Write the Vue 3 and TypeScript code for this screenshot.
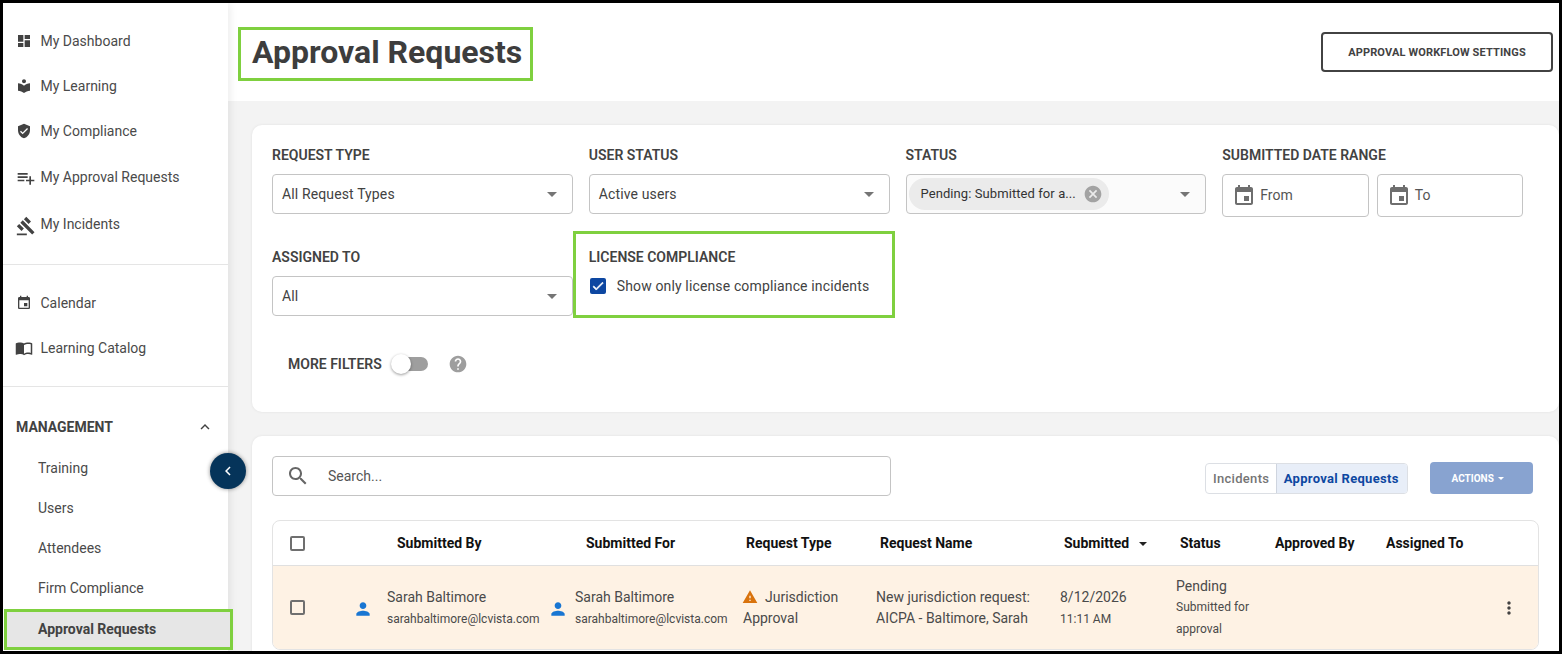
<script setup lang="ts">
const icons: Record<string, string> = {
  dashboard: 'M3 13h8V3H3v10zm0 8h8v-6H3v6zm10 0h8V11h-8v10zm0-18v6h8V3h-8z',
  library: 'M12 11.55C9.64 9.35 6.48 8 3 8v11c3.48 0 6.64 1.35 9 3.55 2.36-2.19 5.52-3.55 9-3.55V8c-3.48 0-6.64 1.35-9 3.55zM12 8c1.66 0 3-1.34 3-3s-1.34-3-3-3-3 1.34-3 3 1.34 3 3 3z',
  shield: 'M12 1L3 5v6c0 5.55 3.84 10.74 9 12 5.16-1.26 9-6.45 9-12V5l-9-4zm-2 16l-4-4 1.41-1.41L10 14.17l6.59-6.59L18 9l-8 8z',
  playlist: 'M14 10H2v2h12v-2zm0-4H2v2h12V6zm4 8v-4h-2v4h-4v2h4v4h2v-4h4v-2h-4zM2 16h8v-2H2v2z',
  gavel: 'M1 21h12v2H1zM5.245 8.07l2.83-2.827 14.14 14.142-2.828 2.828zM12.317 1l5.657 5.656-2.83 2.83-5.654-5.66zM3.825 9.485l5.657 5.657-2.828 2.828-5.657-5.657z',
  event: 'M17 12h-5v5h5v-5zM16 1v2H8V1H6v2H5c-1.11 0-1.99.9-1.99 2L3 19c0 1.1.89 2 2 2h14c1.1 0 2-.9 2-2V5c0-1.1-.9-2-2-2h-1V1h-2zm3 18H5V8h14v11z',
  book: 'M21 5c-1.11-.35-2.33-.5-3.5-.5-1.95 0-4.05.4-5.5 1.5-1.45-1.1-3.55-1.5-5.5-1.5S2.45 4.9 1 6v14.65c0 .25.25.5.5.5.1 0 .15-.05.25-.05C3.1 20.45 5.05 20 6.5 20c1.95 0 4.05.4 5.5 1.5 1.35-.85 3.8-1.5 5.5-1.5 1.65 0 3.35.3 4.75 1.05.1.05.15.05.25.05.25 0 .5-.25.5-.5V6c-.6-.45-1.25-.75-2-1zm0 13.5c-1.1-.35-2.3-.5-3.5-.5-1.7 0-4.15.65-5.5 1.5V8c1.35-.85 3.8-1.5 5.5-1.5 1.2 0 2.4.15 3.5.5v11.5z',
  person: 'M12 12c2.21 0 4-1.79 4-4s-1.79-4-4-4-4 1.79-4 4 1.79 4 4 4zm0 2c-2.67 0-8 1.34-8 4v2h16v-2c0-2.66-5.33-4-8-4z',
  warning: 'M1 21h22L12 2 1 21zm12-3h-2v-2h2v2zm0-4h-2v-4h2v4z',
  search: 'M15.5 14h-.79l-.28-.27C15.41 12.59 16 11.11 16 9.5 16 5.91 13.09 3 9.5 3S3 5.91 3 9.5 5.91 16 9.5 16c1.61 0 3.09-.59 4.23-1.57l.27.28v.79l5 4.99L20.49 19l-4.99-5zm-6 0C7.01 14 5 11.99 5 9.5S7.01 5 9.5 5 14 7.01 14 9.5 11.99 14 9.5 14z',
  more: 'M12 8c1.1 0 2-.9 2-2s-.9-2-2-2-2 .9-2 2 .9 2 2 2zm0 2c-1.1 0-2 .9-2 2s.9 2 2 2 2-.9 2-2-.9-2-2-2zm0 6c-1.1 0-2 .9-2 2s.9 2 2 2 2-.9 2-2-.9-2-2-2z',
  help: 'M12 2C6.48 2 2 6.48 2 12s4.48 10 10 10 10-4.48 10-10S17.52 2 12 2zm1 17h-2v-2h2v2zm2.07-7.75l-.9.92C13.45 12.9 13 13.5 13 15h-2v-.5c0-1.1.45-2.1 1.17-2.83l1.24-1.26c.37-.36.59-.86.59-1.41 0-1.1-.9-2-2-2s-2 .9-2 2H8c0-2.21 1.79-4 4-4s4 1.79 4 4c0 .88-.36 1.68-.93 2.25z',
  cancel: 'M12 2C6.47 2 2 6.47 2 12s4.47 10 10 10 10-4.47 10-10S17.53 2 12 2zm5 13.59L15.59 17 12 13.41 8.41 17 7 15.59 10.59 12 7 8.41 8.41 7 12 10.59 15.59 7 17 8.41 13.41 12 17 15.59z',
  calendar: 'M17 12h-5v5h5v-5zM16 1v2H8V1H6v2H5c-1.11 0-1.99.9-1.99 2L3 19c0 1.1.89 2 2 2h14c1.1 0 2-.9 2-2V5c0-1.1-.9-2-2-2h-1V1h-2zm3 18H5V8h14v11z',
  check: 'M9 16.17L4.83 12l-1.42 1.41L9 19 21 7l-1.41-1.41z',
  up: 'M7.41 15.41L12 10.83l4.59 4.58L18 14l-6-6-6 6z',
  left: 'M15.41 7.41L14 6l-6 6 6 6 1.41-1.41L10.83 12z'
}

const primaryNav = [
  { label: 'My Dashboard', icon: icons.dashboard, size: '' },
  { label: 'My Learning', icon: icons.library, size: '' },
  { label: 'My Compliance', icon: icons.shield, size: '' },
  { label: 'My Approval Requests', icon: icons.playlist, size: 'big' },
  { label: 'My Incidents', icon: icons.gavel, size: 'big' }
]
const secondaryNav = [
  { label: 'Calendar', icon: icons.event, size: '' },
  { label: 'Learning Catalog', icon: icons.book, size: 'mid' }
]
const subNav = ['Training', 'Users', 'Attendees', 'Firm Compliance']
</script>

<template>
  <div class="frame">
    <aside class="sidebar">
      <nav class="nav-group first">
        <a v-for="item in primaryNav" :key="item.label" class="nav-row">
          <svg class="nav-icon" :class="item.size" viewBox="0 0 24 24"><path :d="item.icon" /></svg>
          <span>{{ item.label }}</span>
        </a>
      </nav>
      <nav class="nav-group second">
        <a v-for="item in secondaryNav" :key="item.label" class="nav-row">
          <svg class="nav-icon" :class="item.size" viewBox="0 0 24 24"><path :d="item.icon" /></svg>
          <span>{{ item.label }}</span>
        </a>
      </nav>
      <div class="manage">
        <div class="manage-head">
          <span>MANAGEMENT</span>
          <svg class="chev" viewBox="0 0 24 24"><path :d="icons.up" /></svg>
        </div>
        <a v-for="item in subNav" :key="item" class="sub-row">{{ item }}</a>
        <a class="sub-row active">Approval Requests</a>
      </div>
      <button class="collapse" type="button" aria-label="Collapse">
        <svg viewBox="0 0 24 24"><path :d="icons.left" /></svg>
      </button>
    </aside>

    <div class="content">
      <header class="page-head">
        <h1>Approval Requests</h1>
        <button class="settings" type="button">APPROVAL WORKFLOW SETTINGS</button>
      </header>

      <main class="page-body">
        <section class="card filters">
          <div class="filter-grid">
            <div class="field">
              <label>REQUEST TYPE</label>
              <div class="select"><span>All Request Types</span><i class="caret"></i></div>
            </div>
            <div class="field">
              <label>USER STATUS</label>
              <div class="select"><span>Active users</span><i class="caret"></i></div>
            </div>
            <div class="field">
              <label>STATUS</label>
              <div class="select chip-select">
                <span class="chip">
                  <span>Pending: Submitted for a...</span>
                  <svg viewBox="0 0 24 24"><path :d="icons.cancel" /></svg>
                </span>
                <i class="caret"></i>
              </div>
            </div>
            <div class="field">
              <label>SUBMITTED DATE RANGE</label>
              <div class="dates">
                <div class="date"><svg viewBox="0 0 24 24"><path :d="icons.calendar" /></svg><span>From</span></div>
                <div class="date"><svg viewBox="0 0 24 24"><path :d="icons.calendar" /></svg><span>To</span></div>
              </div>
            </div>
            <div class="field">
              <label>ASSIGNED TO</label>
              <div class="select"><span>All</span><i class="caret"></i></div>
            </div>
            <div class="field license">
              <label>LICENSE COMPLIANCE</label>
              <div class="check-row">
                <span class="checkbox"><svg viewBox="0 0 24 24"><path :d="icons.check" /></svg></span>
                <span>Show only license compliance incidents</span>
              </div>
            </div>
          </div>
          <div class="more-filters">
            <span class="more-label">MORE FILTERS</span>
            <span class="toggle"><i></i></span>
            <svg class="help" viewBox="0 0 24 24"><path :d="icons.help" /></svg>
          </div>
        </section>

        <section class="card results">
          <div class="toolbar">
            <div class="search">
              <svg viewBox="0 0 24 24"><path :d="icons.search" /></svg>
              <span>Search...</span>
            </div>
            <div class="segments">
              <span class="seg">Incidents</span>
              <span class="seg on">Approval Requests</span>
            </div>
            <button class="actions" type="button">ACTIONS<i></i></button>
          </div>

          <div class="table">
            <div class="tr thead">
              <div class="cell"><span class="box"></span></div>
              <div class="cell h-by">Submitted By</div>
              <div class="cell h-for">Submitted For</div>
              <div class="cell h-type">Request Type</div>
              <div class="cell h-std">Request Name</div>
              <div class="cell h-std">Submitted<i class="sort"></i></div>
              <div class="cell h-std">Status</div>
              <div class="cell">Approved By</div>
              <div class="cell">Assigned To</div>
              <div class="cell"></div>
            </div>
            <div class="tr tbody">
              <div class="cell"><span class="box"></span></div>
              <div class="cell user">
                <svg viewBox="0 0 24 24"><path :d="icons.person" /></svg>
                <div><div class="name">Sarah Baltimore</div><div class="small">sarahbaltimore@lcvista.com</div></div>
              </div>
              <div class="cell user tight">
                <svg viewBox="0 0 24 24"><path :d="icons.person" /></svg>
                <div><div class="name">Sarah Baltimore</div><div class="small">sarahbaltimore@lcvista.com</div></div>
              </div>
              <div class="cell stack">
                <div class="type-line"><svg viewBox="0 0 24 24"><path :d="icons.warning" /></svg>Jurisdiction</div>
                <div class="name">Approval</div>
              </div>
              <div class="cell stack">
                <div class="name">New jurisdiction request:</div>
                <div class="name">AICPA - Baltimore, Sarah</div>
              </div>
              <div class="cell stack">
                <div class="name">8/12/2026</div>
                <div class="small">11:11 AM</div>
              </div>
              <div class="cell stack status">
                <div class="name">Pending</div>
                <div class="small">Submitted for approval</div>
              </div>
              <div class="cell"></div>
              <div class="cell"></div>
              <div class="cell kebab"><svg viewBox="0 0 24 24"><path :d="icons.more" /></svg></div>
            </div>
          </div>
        </section>
      </main>
    </div>
  </div>
</template>

<style>
html, body { margin: 0; padding: 0; background: #000; }
</style>

<style scoped>
* { box-sizing: border-box; }
.frame {
  width: 1562px; height: 654px; border: 3px solid #000; display: flex; overflow: hidden;
  background: #f3f3f3; font-family: Roboto, "Liberation Sans", sans-serif; color: #424242;
  font-size: 14px;
}
.sidebar {
  position: relative; width: 225px; flex: none; background: #fff; z-index: 2;
  box-shadow: 2px 0 8px rgba(0, 0, 0, .08);
}
.nav-group { border-bottom: 1px solid #e5e5e5; }
.nav-group.first { padding-top: 15px; height: 262px; }
.nav-group.second { padding-top: 15px; height: 122px; }
.nav-row { display: flex; align-items: center; height: 45px; padding-left: 13px; color: #4a4a4a; }
.nav-row:nth-child(4) { margin-top: 1px; }
.nav-row:nth-child(5) { margin-top: 2px; }
.nav-row span { margin-left: 8.5px; white-space: nowrap; }
.nav-icon { width: 16px; height: 16px; fill: #424242; flex: none; }
.nav-icon.mid { width: 18px; height: 18px; margin: 0 -1px; }
.nav-icon.big { width: 20px; height: 20px; margin-right: -4px; }
.nav-row:nth-child(4) .nav-icon.big { margin-top: 3px; }
.nav-row:nth-child(5) .nav-icon.big { margin-top: 4px; }
.manage { padding-top: 20px; }
.manage-head {
  display: flex; align-items: center; justify-content: space-between; height: 40px;
  margin-bottom: 1px; padding: 0 14px 0 13px; font-weight: 700;
}
.chev { width: 18px; height: 18px; fill: #424242; }
.sub-row { display: flex; align-items: center; height: 40px; padding-left: 35px; color: #4a4a4a; }
.sub-row.active {
  position: relative; margin: 1px 0 0 1px; width: 229px; height: 41px; padding: 0 0 2px 31px;
  background: #e6e6e6; border: 3px solid #7fd03f; font-weight: 700; color: #424242;
}
.collapse {
  position: absolute; left: 207px; top: 450px; width: 36px; height: 36px; padding: 0;
  border: 0; border-radius: 50%; background: #05345a; display: flex; align-items: center;
  justify-content: center; box-shadow: 0 0 4px rgba(0, 0, 0, .45);
}
.collapse svg { width: 18px; height: 18px; fill: #fff; }
.content { flex: 1; min-width: 0; display: flex; flex-direction: column; }
.page-head {
  height: 98px; flex: none; background: #fff; display: flex; align-items: center;
  justify-content: space-between; padding: 0 6px 0 10px;
}
h1 {
  margin: 4px 0 0; height: 54px; padding: 0 8px 4px 11px; display: flex; align-items: center;
  border: 3px solid #7fd03f; font-size: 32px; font-weight: 700; color: #3d3d3d;
}
.settings {
  width: 232px; height: 40px; background: #fff; border: 2px solid #424242; border-radius: 4px;
  font: 700 11px Roboto, sans-serif; color: #424242; letter-spacing: .15px;
}
.page-body { padding: 24px 0 0 24px; display: flex; flex-direction: column; gap: 24px; }
.card { background: #fff; border-radius: 10px; box-shadow: 0 0 3px rgba(0, 0, 0, .08); }
.filters { height: 287px; padding: 21px 36px 0 20px; }
.filter-grid { display: grid; grid-template-columns: repeat(4, 300.75px); column-gap: 16px; grid-auto-rows: 102px; }
.field label { display: block; height: 18px; line-height: 18px; font-weight: 600; margin-bottom: 10px; }
.select {
  height: 40px; border: 1px solid #c4c4c4; border-radius: 4px; display: flex; align-items: center;
  justify-content: space-between; padding: 0 15px 0 9px; color: #424242; letter-spacing: .13px;
}
.caret { width: 0; height: 0; border: 5px solid transparent; border-top-color: #757575; border-bottom: 0; flex: none; }
.chip-select { padding-left: 2px; background: #fbfbfb; }
.chip { display: flex; align-items: center; width: 200px; height: 32px; padding: 0 6px 2px 12px; border-radius: 16px; background: #ebebeb; font-size: 13px; color: #333; letter-spacing: .08px; }
.chip span { flex: 1; }
.chip svg { width: 20px; height: 20px; margin: 2px 0 0 6px; fill: #a3a3a3; }
.dates { display: flex; gap: 8px; width: 301px; }
.date { flex: 1; height: 43px; border: 1px solid #c4c4c4; border-radius: 4px; display: flex; align-items: center; padding-left: 9px; gap: 4px; color: #555; }
.date span { padding-bottom: 2px; }
.date svg { width: 24px; height: 24px; fill: #6e6e6e; }
.license { position: relative; }
.license::after {
  content: ""; position: absolute; left: -16px; top: -17px; width: 322px; height: 87px; box-sizing: border-box;
  border: 3px solid #7fd03f; pointer-events: none;
}
.check-row { display: flex; align-items: center; gap: 11px; margin-top: -3px; height: 26px; padding-left: 1px; letter-spacing: .14px; }
.checkbox { width: 16px; height: 16px; border-radius: 2px; background: #0d47a1; display: flex; align-items: center; justify-content: center; flex: none; }
.checkbox svg { width: 14px; height: 14px; fill: #fff; stroke: #fff; stroke-width: 1.2; }
.more-filters { display: flex; align-items: center; height: 24px; margin-top: 2px; padding-left: 16px; }
.more-label { font-weight: 600; }
.toggle { position: relative; width: 28px; height: 14px; margin-left: 18px; border-radius: 7px; background: #9e9e9e; }
.toggle i { position: absolute; left: -9px; top: -3px; width: 20px; height: 20px; border-radius: 50%; background: #fff; box-shadow: 0 1px 3px rgba(0, 0, 0, .4); }
.help { width: 20px; height: 20px; margin-left: 20px; fill: #9e9e9e; }
.results { padding: 20px 20px 0; height: 240px; overflow: hidden; }
.toolbar { display: flex; align-items: flex-start; height: 40px; margin-bottom: 24px; }
.search { width: 619px; height: 40px; border: 1px solid #c4c4c4; border-radius: 4px; display: flex; align-items: center; padding-left: 13px; color: #555; }
.search svg { width: 24px; height: 24px; fill: #666; margin-right: 18px; }
.segments { display: flex; margin: 7px 0 0 314px; height: 31px; border: 1px solid #dcdfe4; border-radius: 4px; font-size: 13px; letter-spacing: .3px; }
.seg { display: flex; align-items: center; padding: 0 7px 1px; color: #757575; font-weight: 500; }
.seg.on { background: #e8eef8; color: #0d47a1; font-weight: 700; border-left: 1px solid #cfd5df; border-radius: 0 3px 3px 0; padding: 0 8px 1px 6.5px; }
.actions { display: flex; align-items: center; justify-content: center; gap: 4px; width: 103px; height: 32px; margin: 6px 0 0 22px; padding: 0 7px 0 0; border: 0; border-radius: 4px; background: #88a3d0; color: #fff; font: 700 10px Roboto, sans-serif; }
.actions i { width: 0; height: 0; border: 3.5px solid transparent; border-top-color: #fff; border-bottom: 0; }
.table { width: 1267px; border: 1px solid #e3e3e3; border-radius: 8px; overflow: hidden; }
.tr { display: grid; grid-template-columns: 70px 195px 193px 133px 184px 116px 99px 111px 123px 43px; align-items: center; }
.thead { height: 45px; font-weight: 700; color: #111; border-bottom: 1px solid #e0e0e0; }
.tbody { height: 83px; background: #fef2e4; color: #4a4a4a; }
.cell { padding-left: 12px; white-space: nowrap; }
.cell:first-child { padding-left: 17px; }
.thead .h-by { padding-left: 54px; }
.thead .h-for { padding-left: 48px; }
.thead .h-type { padding-left: 15px; }
.thead .h-std { padding-left: 16px; }
.box { display: block; width: 15px; height: 15px; border: 2px solid #6f6f6f; border-radius: 2px; }
.sort { display: inline-block; width: 0; height: 0; margin-left: 10px; vertical-align: 2px; border: 4.5px solid transparent; border-top-color: #222; border-bottom: 0; }
.user { display: flex; align-items: center; gap: 14px; }
.user.tight { gap: 7.5px; }
.user svg { width: 20px; height: 20px; margin: 2px 0 0 -2px; fill: #1976d2; flex: none; }
.user.tight svg { margin-left: -2.5px; }
.user > div { line-height: 22px; }
.name { line-height: 22px; }
.small { font-size: 12px; line-height: 22px; }
.stack { white-space: normal; }
.stack .name + .name, .type-line + .name { margin-top: -1px; }
.type-line { display: flex; align-items: center; line-height: 22px; }
.type-line svg { width: 16px; height: 16px; margin: 0 7px 0 -1px; fill: #d9730d; }
.status { padding-right: 10px; }
.status .small { line-height: 21.5px; }
.kebab svg { width: 20px; height: 20px; fill: #424242; display: block; margin-left: -10px; }
</style>
